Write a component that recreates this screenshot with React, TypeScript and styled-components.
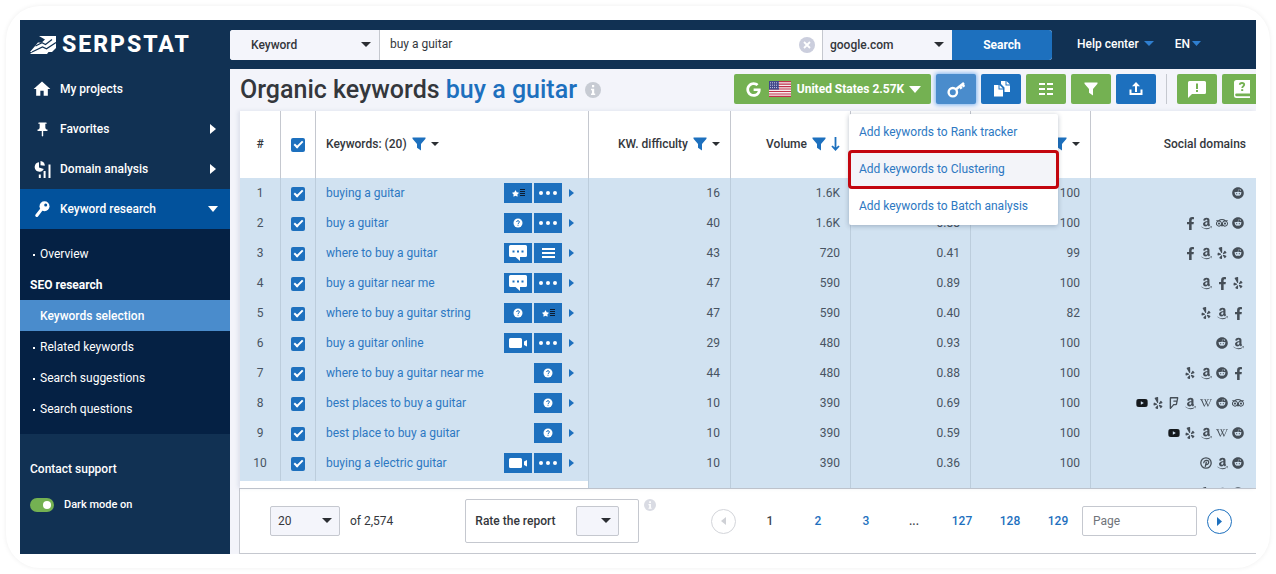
import React from "react";
import styled, { createGlobalStyle, css } from "styled-components";
import {
  FaAmazon, FaFacebookF, FaFoursquare, FaGoogle, FaReddit,
  FaTripadvisor, FaWikipediaW, FaYelp, FaYoutube, FaStar,
} from "react-icons/fa";
import { MdHome, MdPushPin } from "react-icons/md";

const Global = createGlobalStyle`
  *, *::before, *::after { box-sizing: border-box; }
  body {
    margin: 0;
    background: #fff;
    color: #34373c;
    font: 400 12px/16px Roboto, "Liberation Sans", sans-serif;
  }
  button, input, select { font: inherit; color: inherit; margin: 0; }
  button { cursor: pointer; border: 0; padding: 0; }
  a { color: inherit; text-decoration: none; }
  svg { display: block; flex: none; }
`;

const blue = "#1d70be";
const green = "#74b152";
const navy = "#113153";
const line = "#c5c8cf";

const Frame = styled.div`
  margin: 6px;
  padding: 14px;
  border-radius: 34px;
  background: #fff;
  box-shadow: 0 0 5px rgba(0, 0, 0, 0.07);
`;

const Shell = styled.div`
  display: grid;
  grid-template-columns: 210px minmax(0, 1fr);
  overflow: hidden;
`;

/* ---------- sidebar ---------- */
const Sidebar = styled.aside`
  background: ${navy};
  color: #fff;
  font-weight: 500;
`;

const Logo = styled.a`
  display: flex;
  align-items: center;
  gap: 6px;
  height: 49px;
  padding-left: 10px;
  font-size: 23px;
  line-height: 28px;
  font-weight: 800;
  letter-spacing: 2px;
`;

const NavItem = styled.a<{ $active?: boolean }>`
  display: flex;
  align-items: center;
  height: 40px;
  padding: 0 12px;
  background: ${(p) => (p.$active ? "#02529c" : "transparent")};
`;

const NavIcon = styled.span`
  display: flex;
  justify-content: center;
  width: 20px;
  margin-right: 8px;
`;

const NavLabel = styled.span`
  flex: 1;
`;

const NavArrow = styled.span`
  display: flex;
  justify-content: center;
  width: 10px;
`;

const SubMenu = styled.nav`
  padding: 9px 0 10px;
  background: #052144;
`;

const subRow = css`
  display: flex;
  align-items: center;
  height: 31px;
`;

const SubLink = styled.a<{ $active?: boolean }>`
  ${subRow}
  padding-left: 12px;
  background: ${(p) => (p.$active ? "#4a8ccc" : "transparent")};
  font-weight: ${(p) => (p.$active ? 500 : 400)};
  &::before {
    content: "";
    width: 2px;
    height: 2px;
    margin: 2px 5px 0 1px;
    background: ${(p) => (p.$active ? "transparent" : "#fff")};
  }
`;

const SubTitle = styled.div`
  ${subRow}
  padding-left: 10px;
  font-weight: 700;
`;

const SidebarFoot = styled.div`
  display: flex;
  flex-direction: column;
  gap: 20px;
  padding: 27px 10px 0;
`;

const SwitchRow = styled.label`
  display: flex;
  align-items: center;
  gap: 10px;
  font-size: 11px;
`;

const Switch = styled.input`
  appearance: none;
  width: 24px;
  height: 14px;
  border-radius: 7px;
  background: ${green};
  display: flex;
  align-items: center;
  justify-content: flex-end;
  padding-right: 3px;
  &::after {
    content: "";
    width: 8px;
    height: 8px;
    border-radius: 50%;
    background: #fff;
  }
`;

/* ---------- main ---------- */
const Main = styled.main`
  display: flex;
  flex-direction: column;
  min-width: 0;
  background: #f3f4fa;
`;

const TopBar = styled.header`
  display: flex;
  align-items: center;
  height: 49px;
  background: ${navy};
  color: #fff;
  font-weight: 500;
`;

const SearchForm = styled.form`
  display: flex;
  flex: 1;
  height: 30px;
  border-radius: 3px;
  overflow: hidden;
  color: #34373c;
  background: #fff;
`;

const SelectWrap = styled.span<{ $w: number }>`
  position: relative;
  display: block;
  flex: none;
  width: ${(p) => p.$w}px;
  height: 30px;
  & > svg {
    position: absolute;
    right: 8px;
    top: 12px;
    pointer-events: none;
  }
`;

const Select = styled.select<{ $indent: number; $boxed?: boolean }>`
  appearance: none;
  width: 100%;
  height: 100%;
  padding: 0 0 0 ${(p) => p.$indent}px;
  border: ${(p) => (p.$boxed ? `1px solid ${line}` : "0")};
  border-radius: ${(p) => (p.$boxed ? "2px" : "0")};
  background: #f4f5fb;
`;

const SearchBox = styled.div`
  display: flex;
  align-items: center;
  flex: 1;
  padding: 0 7px 0 10px;
  border: solid ${line};
  border-width: 0 1px;
`;

const SearchInput = styled.input`
  flex: 1;
  min-width: 0;
  border: 0;
  padding: 0 0 2px;
  outline: 0;
  background: none;
  font-weight: 400;
`;

const ClearButton = styled.button`
  display: flex;
  align-items: center;
  justify-content: center;
  width: 16px;
  height: 16px;
  border-radius: 50%;
  background: #cbcedd;
`;

const SearchButton = styled.button`
  width: 100px;
  background: ${blue};
  color: #fff;
  font-weight: 700;
`;

const TopLinks = styled.nav`
  display: flex;
  gap: 21px;
  width: 204px;
  padding: 0 0 2px 25px;
`;

const TopLink = styled.a<{ $gap: number }>`
  display: flex;
  align-items: center;
  gap: ${(p) => p.$gap}px;
`;

const TitleBar = styled.div`
  display: flex;
  align-items: center;
  height: 42px;
  padding-left: 10px;
`;

const Title = styled.h1`
  margin: 0 8px 0 0;
  font-size: 25px;
  line-height: 32px;
  font-weight: 500;
  white-space: nowrap;
  & > span { color: ${blue}; }
`;

const Tools = styled.div`
  display: flex;
  align-items: center;
  gap: 5px;
  margin: 0 -6px 2px auto;
`;

const ToolButton = styled.button<{ $tone: "green" | "blue" | "lit" }>`
  display: flex;
  align-items: center;
  justify-content: center;
  width: 40px;
  height: 30px;
  border-radius: 2px;
  color: #fff;
  background: ${(p) => ({ green, blue, lit: "#4a8ccc" })[p.$tone]};
  box-shadow: ${(p) => (p.$tone === "lit" ? "0 0 4px 1px #7db4f0" : "none")};
`;

const RegionButton = styled(ToolButton)`
  width: 197px;
  padding-left: 2px;
  font-weight: 700;
  & > svg:nth-child(1) { margin-right: 8px; }
  & > svg:nth-child(2) { margin-right: 6px; }
  & > svg:nth-child(3) { margin-left: 5px; }
`;

const Divider = styled.span`
  width: 1px;
  height: 30px;
  margin: 0 5px;
  background: ${line};
`;

const MenuAnchor = styled.div`
  position: relative;
`;

const Menu = styled.div`
  position: absolute;
  z-index: 5;
  top: calc(100% + 10px);
  left: -87px;
  width: 209px;
  background: #fff;
  border-radius: 2px;
  box-shadow: 0 1px 5px rgba(30, 50, 80, 0.3);
`;

const MenuItem = styled.a<{ $marked?: boolean }>`
  display: flex;
  align-items: center;
  height: 37px;
  padding: 0 0 2px 10px;
  color: #2d78c2;
  ${(p) =>
    p.$marked &&
    css`
      background: #f3f4f9;
      border-radius: 3px;
      outline: 3px solid #c3060f;
      outline-offset: -2px;
    `}
`;

/* ---------- table ---------- */
const TableView = styled.div`
  position: relative;
  height: 377px;
  margin-left: 10px;
  overflow: hidden;
  background: #fff;
  box-shadow: -2px 0 4px rgba(60, 80, 120, 0.12);
`;

const PinnedScroll = styled.div`
  position: absolute;
  left: 0;
  bottom: 0;
  width: 348px;
  height: 7px;
  background: #fff;
`;

const Table = styled.table`
  width: 100%;
  table-layout: fixed;
  border-collapse: separate;
  border-spacing: 0;
`;

const Th = styled.th<{ $align?: string }>`
  height: 67px;
  padding: 0 10px 2px;
  border-right: 1px solid ${line};
  font-weight: 500;
  text-align: ${(p) => p.$align ?? "right"};
  &:last-child { border-right: 0; }
`;

const ThInner = styled.span<{ $start?: boolean }>`
  display: flex;
  align-items: center;
  justify-content: ${(p) => (p.$start ? "flex-start" : "flex-end")};
  gap: 5px;
`;

const Td = styled.td<{ $align?: string }>`
  height: 30px;
  padding: 0 10px;
  border-right: 1px solid #bccddc;
  background: #d1e2f1;
  color: #485462;
  text-align: ${(p) => p.$align ?? "right"};
  &:last-child { border-right: 0; padding-right: 12px; }
`;

const Check = styled.input`
  appearance: none;
  display: flex;
  align-items: center;
  justify-content: center;
  width: 14px;
  height: 14px;
  margin: 2px 0 0 0;
  border-radius: 2px;
  background: ${blue};
  &::after {
    content: "";
    width: 9px;
    height: 5px;
    margin-bottom: 3px;
    border: solid #fff;
    border-width: 0 0 2px 2px;
    transform: rotate(-45deg);
  }
`;

const KeywordCell = styled.div`
  display: flex;
  align-items: center;
  gap: 2px;
  margin-right: 4px;
`;

const KeywordLink = styled.a`
  flex: 1;
  color: #2d78c2;
`;

const Tag = styled.button`
  display: flex;
  align-items: center;
  justify-content: center;
  width: 28px;
  height: 20px;
  background: ${blue};
  color: #fff;
`;

const Expand = styled.button`
  margin-left: 5px;
  background: none;
`;

const Socials = styled.div`
  display: flex;
  align-items: center;
  justify-content: flex-end;
  color: #454e57;
  margin-right: -2px;
`;

const SocialSlot = styled.span`
  display: flex;
  align-items: center;
  justify-content: center;
  width: 16px;
  height: 14px;
`;

/* ---------- footer ---------- */
const Footer = styled.footer`
  display: flex;
  align-items: center;
  height: 66px;
  margin-left: 9px;
  padding: 0 24px 0 30px;
  border: 1px solid ${line};
  border-right: 0;
  background: #fff;
`;

const Total = styled.span`
  margin: 0 72px 0 10px;
  white-space: nowrap;
`;

const RateBox = styled.label`
  display: flex;
  align-items: center;
  justify-content: space-between;
  flex: none;
  width: 174px;
  height: 44px;
  padding: 0 19px 0 9px;
  border: 1px solid ${line};
  border-radius: 2px;
  font-weight: 500;
`;

const InfoCorner = styled.span`
  align-self: flex-start;
  margin: 10px 0 0 5px;
`;

const Pager = styled.nav`
  display: flex;
  align-items: center;
  margin-left: auto;
  font-weight: 500;
  color: ${blue};
`;

const RoundButton = styled.button<{ $muted?: boolean }>`
  display: flex;
  align-items: center;
  justify-content: center;
  width: 25px;
  height: 25px;
  border: 1px solid ${(p) => (p.$muted ? "#d3d5da" : blue)};
  border-radius: 50%;
  background: #fff;
`;

const PageList = styled.div`
  display: flex;
  margin-left: 10px;
`;

const PageLink = styled.a<{ $plain?: boolean }>`
  width: 48px;
  text-align: center;
  color: ${(p) => (p.$plain ? "#43474d" : blue)};
`;

const PageInput = styled.input`
  width: 115px;
  height: 30px;
  margin-right: 10px;
  padding: 0 10px;
  border: 1px solid ${line};
  border-radius: 2px;
  font-weight: 400;
  &::placeholder { color: #70747a; opacity: 1; }
`;

/* ---------- icons ---------- */
const Caret = ({ w = 10, h = 5, fill = "#2b2e33" }: { w?: number; h?: number; fill?: string }) => (
  <svg width={w} height={h} viewBox="0 0 10 5" preserveAspectRatio="none"><path d="M0 0h10L5 5z" fill={fill} /></svg>
);
const Side = ({ w = 6, h = 10, fill = "#fff", left = false }: { w?: number; h?: number; fill?: string; left?: boolean }) => (
  <svg width={w} height={h} viewBox="0 0 6 10" preserveAspectRatio="none">
    <path d={left ? "M6 0v10L0 5z" : "M0 0v10l6-5z"} fill={fill} />
  </svg>
);
const Funnel = ({ size = 14, fill = blue }: { size?: number; fill?: string }) => (
  <svg width={size} height={size} viewBox="0 0 14 14"><path d="M0.5 0.5h13v1.3L9 7v6.5L5 10.8V7L0.5 1.8z" fill={fill} /></svg>
);
const SortDown = () => (
  <svg width="9" height="14" viewBox="0 0 9 14"><path d="M4.5 0v12.6M1 9l3.5 3.7L8 9" fill="none" stroke={blue} strokeWidth="1.8" /></svg>
);
const Info = ({ size, fill }: { size: number; fill: string }) => (
  <svg width={size} height={size} viewBox="0 0 16 16">
    <circle cx="8" cy="8" r="8" fill={fill} />
    <path d="M7 3h2.2v2.2H7zM6 6.7h3.2v4.8h1V13H6v-1.5h1V8.2H6z" fill="#fff" />
  </svg>
);
const LogoMark = () => (
  <svg width="26" height="18" viewBox="0 0 26 18" fill="#fff">
    <path d="M9 0h17v17l-3.500-1H0l8-9.500 3.500.2 3.500-3.200z" />
    <path d="M0 18l5-4h15l-3 4z" />
    <path d="M5.500 10l6.500-3.300 3.500 1.800L22 3.500M2 16l10.500-5 4 1.800L26 6.500" fill="none" stroke={navy} strokeWidth="1.200" />
    <path d="M26 12l-6 6h6z" fill={navy} />
  </svg>
);
const DomainIcon = () => (
  <svg width="17" height="17" viewBox="0 0 17 17" fill="#fff">
    <path d="M5 1.200v5.300l4.800 1.600A4.800 4.800 0 1 1 5 1.200z" />
    <path d="M6.500 0a4.600 4.600 0 0 1 4.300 4.800l-4.300-.6z" />
    <path d="M4.800 13.500h2V17h-2zM9.600 10h2v7h-2zM14.500 3.500H16.500V17h-2z" />
  </svg>
);
const ResearchKey = () => (
  <svg width="15" height="17" viewBox="0 0 15 17">
    <circle cx="9.500" cy="5.300" r="5" fill="#fff" />
    <circle cx="10.700" cy="4.100" r="1.500" fill="#02529c" />
    <path d="M6.500 8.300L1.800 14.500" stroke="#fff" strokeWidth="3" strokeLinecap="round" />
  </svg>
);
const KeyIcon = () => (
  <svg width="18" height="18" viewBox="0 0 18 18" fill="none" stroke="#fff">
    <circle cx="5.800" cy="12.200" r="4.200" strokeWidth="2.400" />
    <path d="M9 9.200l8-6.200" strokeWidth="2.600" />
    <path d="M13 6.500l1.600 2.300M15.500 4.500l1.700 2.300" strokeWidth="2.600" />
  </svg>
);
const CopyIcon = () => (
  <svg width="17" height="16" viewBox="0 0 17 16" fill="#fff">
    <path d="M8 0h4.500v4.500H17V11h-5.500V6.500L8 3z" />
    <path d="M13.500 0L17 3.500h-3.500z" />
    <path d="M1 4h4.500v4.500H10v7H1z" />
    <path d="M6.500 4L10 7.500H6.500z" />
  </svg>
);
const ColumnsIcon = () => (
  <svg width="14" height="12" viewBox="0 0 14 12"><path d="M0 1h6M8 1h6M0 6h6M8 6h6M0 11h6M8 11h6" stroke="#fff" strokeWidth="2" /></svg>
);
const ExportIcon = () => (
  <svg width="14" height="14" viewBox="0 0 14 14">
    <path d="M1.500 7.500v4.500h11V7.500" fill="none" stroke="#fff" strokeWidth="2" />
    <path d="M7 0l4 4.200H8V10H6V4.200H3z" fill="#fff" />
  </svg>
);
const FeedbackIcon = () => (
  <svg width="18" height="17" viewBox="0 0 18 17">
    <path d="M1.500 0h15A1.500 1.500 0 0 1 18 1.500v10a1.500 1.500 0 0 1-1.500 1.500H4l-4 4V1.500A1.500 1.500 0 0 1 1.500 0z" fill="#fff" />
    <path d="M8 2.500h2V8H8zM8 9h2v2H8z" fill={green} />
  </svg>
);
const BookIcon = () => (
  <svg width="16" height="18" viewBox="0 0 16 18">
    <path d="M2.500 0H16v13.500H2.500a1.200 1.200 0 0 0 0 2.700H16V18H2.500A2.500 2.500 0 0 1 0 15.500v-13A2.500 2.500 0 0 1 2.500 0z" fill="#fff" />
    <path d="M5.800 4.800c0-2.400 4.400-2.400 4.400 0C10.200 6.300 8.200 6.200 8.200 8" fill="none" stroke={green} strokeWidth="1.800" />
    <path d="M7.200 9.200h2V11h-2z" fill={green} />
  </svg>
);
const Flag = () => (
  <svg width="22" height="16" viewBox="0 0 22 16">
    <path d="M0 0h22v16H0z" fill="#f6eef0" />
    <path d="M0 .6h22M0 3.100h22M0 5.600h22M0 8h22M0 10.500h22M0 13h22M0 15.400h22" stroke="#c0304a" strokeWidth="1.200" />
    <path d="M0 0h10v8.600H0z" fill="#41478a" />
    <path d="M1 1.800h8.500M1 4.200h8.500M1 6.600h8.500" stroke="#c9cce4" strokeWidth="1" strokeDasharray="1 1" />
  </svg>
);
const PinterestRing = ({ size }: { size: number; color?: string }) => (
  <svg width={size} height={size} viewBox="0 0 12 12" fill="none" stroke="currentColor">
    <circle cx="6" cy="6" r="5.200" strokeWidth="1.300" />
    <path d="M3.900 6.200C3 3.200 8.900 2 8.700 5.200 8.500 7.800 6.300 7.800 5.700 6.900M6.400 4.600L5.200 9.800" strokeWidth="1.300" />
  </svg>
);

type TagKind = "star" | "dots" | "help" | "chat" | "list" | "video";
const tagNames: Record<TagKind, string> = {
  star: "Reviews", dots: "More", help: "Questions", chat: "Comments", list: "Links", video: "Video",
};
const TagIcon = ({ kind }: { kind: TagKind }) => {
  switch (kind) {
    case "star":
      return (
        <>
          <FaStar size={7} />
          <svg width="6" height="8" viewBox="0 0 6 8"><path d="M1 .5h5M1 2.500h5M1 4.500h5M1 6.500h5" stroke="#0b1c30" strokeWidth="1" /></svg>
        </>
      );
    case "dots":
      return <svg width="18" height="4" viewBox="0 0 18 4" fill="#fff"><circle cx="2" cy="2" r="2" /><circle cx="9" cy="2" r="2" /><circle cx="16" cy="2" r="2" /></svg>;
    case "help":
      return (
        <svg width="10" height="10" viewBox="0 0 10 10">
          <circle cx="5" cy="5" r="4.500" fill="#fff" />
          <path d="M3.600 4c0-1.800 2.800-1.800 2.800 0C6.400 5 5 5 5 6" fill="none" stroke={blue} />
          <path d="M4.500 6.800h1v1h-1z" fill={blue} />
        </svg>
      );
    case "chat":
      return (
        <svg width="18" height="16" viewBox="0 0 18 16">
          <path d="M1.500 0h15A1.500 1.500 0 0 1 18 1.500v9a1.500 1.500 0 0 1-1.500 1.500H11v4l-4.500-4h-5A1.500 1.500 0 0 1 0 10.500v-9A1.500 1.500 0 0 1 1.500 0z" fill="#fff" />
          <path d="M3.500 5.500h2v2h-2zM8 5.500h2v2H8zM12.500 5.500h2v2h-2z" fill={blue} />
        </svg>
      );
    case "list":
      return <svg width="13" height="10" viewBox="0 0 13 10"><path d="M0 1h13M0 5h13M0 9h13" stroke="#fff" strokeWidth="2" /></svg>;
    case "video":
      return <svg width="18" height="10" viewBox="0 0 18 10" fill="#fff"><path d="M1.500 0h10A1.500 1.500 0 0 1 13 1.500v7a1.500 1.500 0 0 1-1.500 1.500h-10A1.500 1.500 0 0 1 0 8.500v-7A1.500 1.500 0 0 1 1.500 0zM18 2v6.500l-3-1.500V3.500z" /></svg>;
  }
};

const socialIcons = {
  r: FaReddit, f: FaFacebookF, a: FaAmazon, t: FaTripadvisor, y: FaYelp,
  w: FaWikipediaW, s: FaFoursquare, p: PinterestRing, v: FaYoutube,
};
type Social = keyof typeof socialIcons;

type Row = { kw: string; tags: TagKind[]; kd: number; vol: string; cpc: string; comp: number; social: string };
const rows: Row[] = [
  { kw: "buying a guitar", tags: ["star", "dots"], kd: 16, vol: "1.6K", cpc: "", comp: 100, social: "r" },
  { kw: "buy a guitar", tags: ["help", "dots"], kd: 40, vol: "1.6K", cpc: "0.88", comp: 100, social: "fatr" },
  { kw: "where to buy a guitar", tags: ["chat", "list"], kd: 43, vol: "720", cpc: "0.41", comp: 99, social: "fayr" },
  { kw: "buy a guitar near me", tags: ["chat", "dots"], kd: 47, vol: "590", cpc: "0.89", comp: 100, social: "afy" },
  { kw: "where to buy a guitar string", tags: ["help", "star"], kd: 47, vol: "590", cpc: "0.40", comp: 82, social: "yaf" },
  { kw: "buy a guitar online", tags: ["video", "dots"], kd: 29, vol: "480", cpc: "0.93", comp: 100, social: "ra" },
  { kw: "where to buy a guitar near me", tags: ["help"], kd: 44, vol: "480", cpc: "0.88", comp: 100, social: "yarf" },
  { kw: "best places to buy a guitar", tags: ["help"], kd: 10, vol: "390", cpc: "0.69", comp: 100, social: "vysawrt" },
  { kw: "best place to buy a guitar", tags: ["help"], kd: 10, vol: "390", cpc: "0.59", comp: 100, social: "vyawr" },
  { kw: "buying a electric guitar", tags: ["video", "dots"], kd: 10, vol: "390", cpc: "0.36", comp: 100, social: "par" },
];

const SocialList = ({ codes }: { codes: string }) => (
  <Socials>
    {[...codes].map((c) => {
      const Icon = socialIcons[c as Social];
      return (
        <SocialSlot key={c}>
          <Icon size={c === "a" || c === "f" ? 13 : 12} color={c === "v" ? "#15191d" : undefined} />
        </SocialSlot>
      );
    })}
  </Socials>
);

export default function App() {
  return (
    <>
      <Global />
      <Frame>
        <Shell>
          <Sidebar>
            <Logo href="#"><LogoMark />SERPSTAT</Logo>
            <NavItem href="#"><NavIcon><MdHome size={20} /></NavIcon><NavLabel>My projects</NavLabel></NavItem>
            <NavItem href="#"><NavIcon><MdPushPin size={17} /></NavIcon><NavLabel>Favorites</NavLabel><NavArrow><Side /></NavArrow></NavItem>
            <NavItem href="#"><NavIcon><DomainIcon /></NavIcon><NavLabel>Domain analysis</NavLabel><NavArrow><Side /></NavArrow></NavItem>
            <NavItem href="#" $active><NavIcon><ResearchKey /></NavIcon><NavLabel>Keyword research</NavLabel><NavArrow><Caret h={6} fill="#fff" /></NavArrow></NavItem>
            <SubMenu>
              <SubLink href="#">Overview</SubLink>
              <SubTitle>SEO research</SubTitle>
              <SubLink href="#" $active>Keywords selection</SubLink>
              <SubLink href="#">Related keywords</SubLink>
              <SubLink href="#">Search suggestions</SubLink>
              <SubLink href="#">Search questions</SubLink>
            </SubMenu>
            <SidebarFoot>
              <a href="#">Contact support</a>
              <SwitchRow><Switch type="checkbox" role="switch" defaultChecked />Dark mode on</SwitchRow>
            </SidebarFoot>
          </Sidebar>
          <Main>
            <TopBar>
              <SearchForm onSubmit={(e) => e.preventDefault()}>
                <SelectWrap $w={149}>
                  <Select $indent={21} aria-label="Search type"><option>Keyword</option></Select>
                  <Caret />
                </SelectWrap>
                <SearchBox>
                  <SearchInput aria-label="Search query" defaultValue="buy a guitar" />
                  <ClearButton type="button" aria-label="Clear">
                    <svg width="8" height="8" viewBox="0 0 8 8"><path d="M1 1l6 6M7 1L1 7" stroke="#fff" strokeWidth="1.800" /></svg>
                  </ClearButton>
                </SearchBox>
                <SelectWrap $w={129}>
                  <Select $indent={7} aria-label="Search engine"><option>google.com</option></Select>
                  <Caret />
                </SelectWrap>
                <SearchButton>Search</SearchButton>
              </SearchForm>
              <TopLinks>
                <TopLink href="#" $gap={5}>Help center<Caret fill="#2f7fd0" /></TopLink>
                <TopLink href="#" $gap={2}>EN<Caret w={9} fill="#2f7fd0" /></TopLink>
              </TopLinks>
            </TopBar>
            <TitleBar>
              <Title>Organic keywords <span>buy a guitar</span></Title>
              <Info size={16} fill="#c7cbd3" />
              <Tools>
                <RegionButton $tone="green"><FaGoogle size={15} /><Flag />United States 2.57K<Caret w={12} h={7} fill="#fff" /></RegionButton>
                <MenuAnchor>
                  <ToolButton $tone="lit" aria-label="Add keywords"><KeyIcon /></ToolButton>
                  <Menu>
                    <MenuItem href="#">Add keywords to Rank tracker</MenuItem>
                    <MenuItem href="#" $marked>Add keywords to Clustering</MenuItem>
                    <MenuItem href="#">Add keywords to Batch analysis</MenuItem>
                  </Menu>
                </MenuAnchor>
                <ToolButton $tone="blue" aria-label="Copy"><CopyIcon /></ToolButton>
                <ToolButton $tone="green" aria-label="Columns"><ColumnsIcon /></ToolButton>
                <ToolButton $tone="green" aria-label="Filter"><Funnel fill="#fff" /></ToolButton>
                <ToolButton $tone="blue" aria-label="Export"><ExportIcon /></ToolButton>
                <Divider />
                <ToolButton $tone="green" aria-label="Feedback"><FeedbackIcon /></ToolButton>
                <ToolButton $tone="green" aria-label="Manual"><BookIcon /></ToolButton>
              </Tools>
            </TitleBar>
            <TableView>
              <Table>
                <colgroup>
                  <col width="41" /><col width="35" /><col width="273" /><col width="142" />
                  <col width="120" /><col width="120" /><col width="120" /><col />
                </colgroup>
                <thead>
                  <tr>
                    <Th $align="center">#</Th>
                    <Th><Check type="checkbox" defaultChecked aria-label="Select all keywords" /></Th>
                    <Th><ThInner $start>Keywords: (20)<Funnel /><Caret w={8} h={4} /></ThInner></Th>
                    <Th><ThInner>KW. difficulty<Funnel /><Caret w={8} h={4} /></ThInner></Th>
                    <Th><ThInner>Volume<Funnel /><SortDown /></ThInner></Th>
                    <Th><ThInner><Funnel /><Caret w={8} h={4} /></ThInner></Th>
                    <Th><ThInner><Funnel /><Caret w={8} h={4} /></ThInner></Th>
                    <Th>Social domains</Th>
                  </tr>
                </thead>
                <tbody>
                  {rows.map((r, i) => (
                    <tr key={r.kw}>
                      <Td $align="center">{i + 1}</Td>
                      <Td><Check type="checkbox" defaultChecked aria-label={`Select ${r.kw}`} /></Td>
                      <Td $align="left">
                        <KeywordCell>
                          <KeywordLink href="#">{r.kw}</KeywordLink>
                          {r.tags.map((t) => <Tag key={t} aria-label={tagNames[t]}><TagIcon kind={t} /></Tag>)}
                          <Expand aria-label="Open keyword"><Side w={5} h={8} fill={blue} /></Expand>
                        </KeywordCell>
                      </Td>
                      <Td>{r.kd}</Td>
                      <Td>{r.vol}</Td>
                      <Td>{r.cpc}</Td>
                      <Td>{r.comp}</Td>
                      <Td><SocialList codes={r.social} /></Td>
                    </tr>
                  ))}
                  <tr>
                    <Td /><Td /><Td /><Td /><Td /><Td /><Td />
                    <Td><SocialList codes="yar" /></Td>
                  </tr>
                </tbody>
              </Table>
              <PinnedScroll />
            </TableView>
            <Footer>
              <SelectWrap $w={70}>
                <Select $indent={7} $boxed aria-label="Rows per page"><option>20</option></Select>
                <Caret />
              </SelectWrap>
              <Total>of 2,574</Total>
              <RateBox>
                Rate the report
                <SelectWrap $w={43}>
                  <Select $indent={7} $boxed><option></option></Select>
                  <Caret />
                </SelectWrap>
              </RateBox>
              <InfoCorner><Info size={12} fill="#d9dbe3" /></InfoCorner>
              <Pager aria-label="Pages">
                <RoundButton $muted aria-label="Previous page"><Side left w={5} h={8} fill="#cfd1d6" /></RoundButton>
                <PageList>
                  <PageLink $plain>1</PageLink>
                  <PageLink href="#">2</PageLink>
                  <PageLink href="#">3</PageLink>
                  <PageLink $plain>...</PageLink>
                  <PageLink href="#">127</PageLink>
                  <PageLink href="#">128</PageLink>
                  <PageLink href="#">129</PageLink>
                </PageList>
                <PageInput placeholder="Page" aria-label="Page" />
                <RoundButton aria-label="Next page"><Side w={5} h={9} fill={blue} /></RoundButton>
              </Pager>
            </Footer>
          </Main>
        </Shell>
      </Frame>
    </>
  );
}
